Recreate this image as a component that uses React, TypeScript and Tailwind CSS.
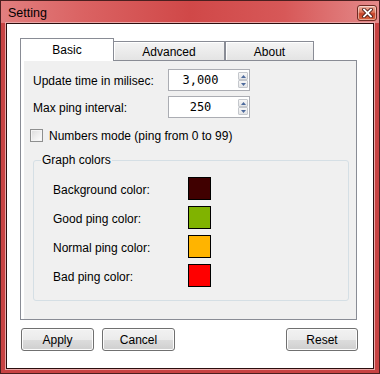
import React from "react";

function CloseButton() {
  return (
    <div className="mt-[2px] w-[20px] h-[16px] rounded-[3px] border border-[#6e2a22] bg-[linear-gradient(#eeb4a4_0%,#dc7458_45%,#c4432a_55%,#d8643e_100%)] shadow-[inset_0_0_0_1px_rgba(255,255,255,0.45)] flex items-center justify-center">
      <svg width="11" height="10" viewBox="0 0 11 10">
        <path d="M2 1.5 L9 8.5 M9 1.5 L2 8.5" stroke="#4a1a14" strokeWidth="3.6" strokeLinecap="square" />
        <path d="M2 1.5 L9 8.5 M9 1.5 L2 8.5" stroke="#ffffff" strokeWidth="1.8" strokeLinecap="square" />
      </svg>
    </div>
  );
}

function SpinBtn({ up }: { up?: boolean }) {
  return (
    <div className="w-[10px] h-[8px] border border-[#c4c7cc] rounded-[1px] bg-[linear-gradient(#f7f7f7,#e3e4e6)] flex items-center justify-center">
      <svg width="5" height="3" viewBox="0 0 5 3">
        {up ? <path d="M0 3 L2.5 0 L5 3 Z" fill="#4d6a9c" /> : <path d="M0 0 L2.5 3 L5 0 Z" fill="#4d6a9c" />}
      </svg>
    </div>
  );
}

function Spin({ value }: { value: string }) {
  return (
    <div className="w-[82px] h-[22px] border border-[#abadb3] bg-white flex items-center pr-[1px]">
      <span className="flex-1 pr-[6px] text-center font-['DejaVu_Sans_Mono',monospace] text-[12px] leading-none text-black">
        {value}
      </span>
      <div className="flex flex-col w-[10px]">
        <SpinBtn up />
        <SpinBtn />
      </div>
    </div>
  );
}

function Button({ label, w }: { label: string; w: string }) {
  return (
    <button
      className={`${w} h-[23px] rounded-[3px] border border-[#707070] bg-[linear-gradient(#f2f2f2_0%,#ebebeb_50%,#dddddd_50%,#cfcfcf_100%)] shadow-[inset_0_0_0_1px_#fcfcfc] text-[12px] text-black leading-none pt-[1px]`}
    >
      {label}
    </button>
  );
}

const colors = [
  { label: "Background color:", color: "bg-[#400000]" },
  { label: "Good ping color:", color: "bg-[#80b300]" },
  { label: "Normal ping color:", color: "bg-[#ffb400]" },
  { label: "Bad ping color:", color: "bg-[#ff0000]" },
];

export default function App() {
  return (
    <div className="w-[380px] h-[374px] flex flex-col border border-[#4b1f1f] bg-[#c84343] font-['Liberation_Sans',Arial,sans-serif] text-[12px] text-black">
      <div className="h-[22px] shrink-0 flex items-center justify-between pl-[7px] pr-[2px] bg-[linear-gradient(90deg,#e27f7f_0%,#da6262_22%,#d04848_50%,#d75858_75%,#e48a8a_100%)]">
        <span className="text-[12.5px] text-black leading-none mt-[3px]">Setting</span>
        <CloseButton />
      </div>
      <div className="flex-1 flex flex-col px-[5px] pb-[4px]">
        <div className="flex-1 border border-[#2b0e0e] shadow-[0_0_0_1px_#eaa7a7] bg-white flex flex-col pt-[14px]">
          <div className="ml-[13px] w-[337px]">
            <div className="flex items-end h-[22px]">
              <div className="relative z-10 w-[94px] h-[23px] -mb-[1px] border border-b-0 border-[#898c95] bg-white flex items-center justify-center pb-[1px]">
                Basic
              </div>
              <div className="w-[111px] h-[19px] border-t border-r border-[#898c95] bg-[linear-gradient(#f4f4f4,#e4e4e4)] shadow-[inset_1px_1px_0_#ffffff] flex items-center justify-center pt-[2px]">
                Advanced
              </div>
              <div className="w-[89px] h-[19px] border border-b-0 border-[#898c95] bg-[linear-gradient(#f4f4f4,#e4e4e4)] shadow-[inset_1px_1px_0_#ffffff] flex items-center justify-center pt-[2px]">
                About
              </div>
            </div>
            <div className="h-[260px] border border-[#898c95] bg-white pl-[3px]">
              <div className="h-full bg-[#f0f0f0] pt-[8px] pl-[9px] flex flex-col">
                <div className="flex items-center h-[22px]">
                  <span className="w-[135px] pt-[1px]">Update time in milisec:</span>
                  <Spin value="3,000" />
                </div>
                <div className="flex items-center h-[22px] mt-[5px]">
                  <span className="w-[135px] pt-[1px]">Max ping interval:</span>
                  <Spin value="250" />
                </div>
                <div className="flex items-center h-[13px] mt-[11px] -ml-[3px]">
                  <div className="w-[13px] h-[13px] border border-[#8e8f8f] bg-[linear-gradient(135deg,#dcdcdc,#ffffff)] shadow-[inset_0_0_0_1px_#f4f4f4]" />
                  <span className="ml-[6px]">Numbers mode (ping from 0 to 99)</span>
                </div>
                <div className="relative mt-[18px] w-[316px] h-[141px] border border-[#d5dfe5] rounded-[3px] pt-[16px] pl-[19px] flex flex-col gap-[6px]">
                  <span className="absolute left-[7px] top-[-8px] px-[1px] bg-[#f0f0f0] leading-[14px]">Graph colors</span>
                  {colors.map((c) => (
                    <div key={c.label} className="flex items-center h-[23px]">
                      <span className="w-[135px] pt-[3px]">{c.label}</span>
                      <div className={`w-[23px] h-[23px] border border-black ${c.color}`} />
                    </div>
                  ))}
                </div>
              </div>
            </div>
          </div>
          <div className="flex justify-between pl-[14px] pr-[15px] mt-[8px]">
            <div className="flex gap-[8px]">
              <Button label="Apply" w="w-[73px]" />
              <Button label="Cancel" w="w-[73px]" />
            </div>
            <Button label="Reset" w="w-[72px]" />
          </div>
        </div>
      </div>
    </div>
  );
}
